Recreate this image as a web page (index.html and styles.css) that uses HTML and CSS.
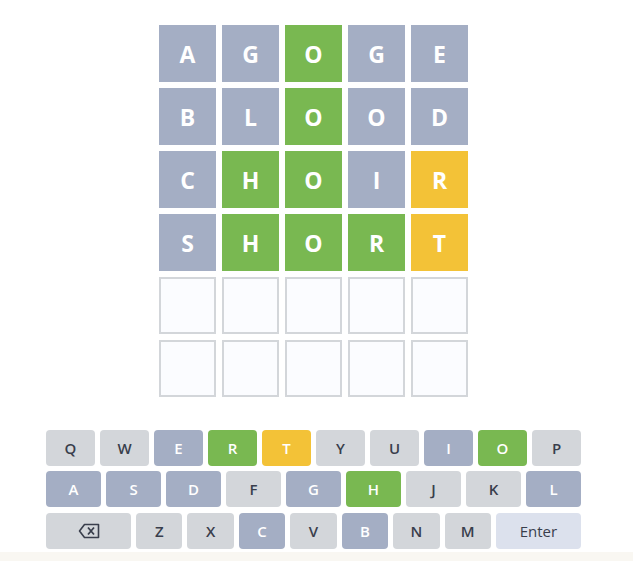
FILE: index.html
```html
<!DOCTYPE html>
<html lang="en">
<head>
<meta charset="utf-8">
<title>Word game</title>
<link rel="stylesheet" href="styles.css">
</head>
<body>
<div class="app">
  <div class="board">
    <div class="row">
      <div class="tile absent">A</div><div class="tile absent">G</div><div class="tile correct">O</div><div class="tile absent">G</div><div class="tile absent">E</div>
    </div>
    <div class="row">
      <div class="tile absent">B</div><div class="tile absent">L</div><div class="tile correct">O</div><div class="tile absent">O</div><div class="tile absent">D</div>
    </div>
    <div class="row">
      <div class="tile absent">C</div><div class="tile correct">H</div><div class="tile correct">O</div><div class="tile absent">I</div><div class="tile present">R</div>
    </div>
    <div class="row">
      <div class="tile absent">S</div><div class="tile correct">H</div><div class="tile correct">O</div><div class="tile correct">R</div><div class="tile present">T</div>
    </div>
    <div class="row">
      <div class="tile empty"></div><div class="tile empty"></div><div class="tile empty"></div><div class="tile empty"></div><div class="tile empty"></div>
    </div>
    <div class="row">
      <div class="tile empty"></div><div class="tile empty"></div><div class="tile empty"></div><div class="tile empty"></div><div class="tile empty"></div>
    </div>
  </div>
  <div class="keyboard">
    <div class="krow">
      <div class="key">Q</div><div class="key">W</div><div class="key absent">E</div><div class="key correct">R</div><div class="key present">T</div><div class="key">Y</div><div class="key">U</div><div class="key absent">I</div><div class="key correct">O</div><div class="key">P</div>
    </div>
    <div class="krow">
      <div class="key absent">A</div><div class="key absent">S</div><div class="key absent">D</div><div class="key">F</div><div class="key absent">G</div><div class="key correct">H</div><div class="key">J</div><div class="key">K</div><div class="key absent">L</div>
    </div>
    <div class="krow">
      <div class="key wide"><svg class="bs" width="22" height="16" viewBox="0 0 22 16"><path d="M6.5 1.5 H20.5 V14.5 H6.5 L1.5 8 Z" fill="none" stroke="#393e4c" stroke-width="1.6" stroke-linejoin="round"/><path d="M10 4.5 L16 11.5 M16 4.5 L10 11.5" stroke="#393e4c" stroke-width="1.8"/></svg></div><div class="key">Z</div><div class="key">X</div><div class="key absent">C</div><div class="key">V</div><div class="key absent">B</div><div class="key">N</div><div class="key">M</div><div class="key wide enter">Enter</div>
    </div>
  </div>
</div>
<div class="footer"></div>
</body>
</html>
```
FILE: styles.css
```css
html, body {
  margin: 0;
  padding: 0;
  background: #ffffff;
  font-family: "Open Sans", "Noto Sans", sans-serif;
}
.app {
  width: 627px;
  height: 552px;
  display: flex;
  flex-direction: column;
  align-items: center;
  box-sizing: border-box;
  padding-top: 25px;
}
.board {
  display: flex;
  flex-direction: column;
  gap: 6px;
}
.row {
  display: flex;
  gap: 6px;
}
.tile {
  width: 57px;
  height: 57px;
  box-sizing: border-box;
  display: flex;
  align-items: center;
  justify-content: center;
  color: #ffffff;
  font-size: 23px;
  font-weight: 700;
}
.tile.absent { background: #a4aec4; }
.tile.correct { background: #79b851; }
.tile.present { background: #f3c237; }
.tile.empty {
  background: #fbfcff;
  border: 2px solid #d3d6da;
}
.keyboard {
  margin-top: 33px;
  width: 535px;
  display: flex;
  flex-direction: column;
  gap: 5px;
}
.krow {
  display: flex;
  gap: 5px;
  height: 36px;
}
.krow:last-child { margin-top: 1px; }
.key {
  flex: 1 1 0;
  min-width: 0;
  background: #d3d6da;
  border-radius: 4px;
  display: flex;
  align-items: center;
  justify-content: center;
  color: #393e4c;
  font-size: 15px;
  font-weight: 600;
}
.key.absent { background: #a4aec4; color: #ffffff; }
.key.correct { background: #79b851; color: #ffffff; }
.key.present { background: #f3c237; color: #ffffff; }
.key.wide { flex: 0 0 85px; }
.key.enter { background: #dce1ed; font-weight: 500; }
.bs { display: block; }
.footer {
  height: 9px;
  background: #f9f7f2;
}
```
